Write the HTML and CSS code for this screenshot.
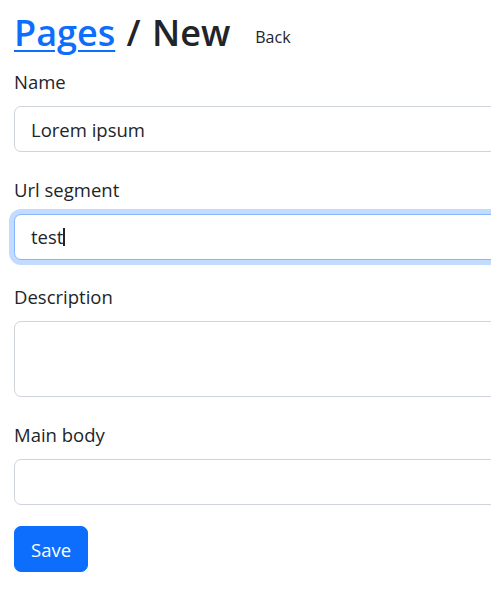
FILE: index.html
```html
<!DOCTYPE html>
<html lang="en">
<head>
<meta charset="utf-8">
<title>Pages / New</title>
<link rel="stylesheet" href="styles.css">
</head>
<body>
<div class="page">
  <div class="title-row">
    <h1 class="title"><a href="#" class="title-link">Pages</a> / New</h1>
    <a href="#" class="back">Back</a>
  </div>
  <form class="form">
    <div class="group">
      <label class="label" for="name">Name</label>
      <input class="field" id="name" type="text" value="Lorem ipsum">
    </div>
    <div class="group">
      <label class="label" for="url">Url segment</label>
      <div class="field field-focus" id="url">test<span class="caret"></span></div>
    </div>
    <div class="group">
      <label class="label" for="desc">Description</label>
      <textarea class="field field-area" id="desc"></textarea>
    </div>
    <div class="group">
      <label class="label" for="body">Main body</label>
      <input class="field" id="body" type="text" value="">
    </div>
    <button type="button" class="btn">Save</button>
  </form>
</div>
</body>
</html>
```
FILE: styles.css
```css
html, body {
  margin: 0;
  padding: 0;
  background: #fff;
  overflow: hidden;
}
body {
  font-family: "Open Sans", "Noto Sans", sans-serif;
  font-size: 18.5px;
  color: #212529;
}
.page {
  padding: 12px 0 0 14px;
  width: 620px;
  overflow: hidden;
}
.title-row {
  display: flex;
  align-items: flex-end;
  gap: 25px;
  margin-bottom: 14px;
}
.title {
  margin: 0;
  font-size: 36px;
  font-weight: 600;
  line-height: 41px;
  word-spacing: 2px;
}
.title-link {
  color: #0d6efd;
  text-decoration: underline;
  text-decoration-thickness: 2px;
  text-underline-offset: 4px;
}
.back {
  color: #212529;
  text-decoration: none;
  font-size: 16px;
  line-height: 22px;
  padding-bottom: 5px;
}
.form {
  display: flex;
  flex-direction: column;
}
.group {
  display: flex;
  flex-direction: column;
  margin-bottom: 22.6px;
}
.label {
  display: block;
  line-height: 29px;
  margin-bottom: 10px;
}
.field {
  box-sizing: border-box;
  display: block;
  width: 600px;
  height: 46px;
  margin: 0;
  padding: 0 16px;
  font: inherit;
  color: #212529;
  background: #fff;
  border: 1px solid #ced4da;
  border-radius: 7px;
  outline: none;
}
.field-focus {
  display: flex;
  align-items: center;
  border-color: #86b7fe;
  box-shadow: 0 0 0 5px rgba(13, 110, 253, 0.25);
}
.caret {
  display: inline-block;
  width: 2px;
  height: 18px;
  background: #212529;
}
.field-area {
  height: 76px;
  resize: none;
  padding-top: 8px;
}
.btn {
  align-self: flex-start;
  margin-top: -1px;
  box-sizing: border-box;
  height: 46px;
  padding: 0 16px;
  font: inherit;
  color: #fff;
  background: #0d6efd;
  border: 1px solid #0d6efd;
  border-radius: 7px;
}
```
